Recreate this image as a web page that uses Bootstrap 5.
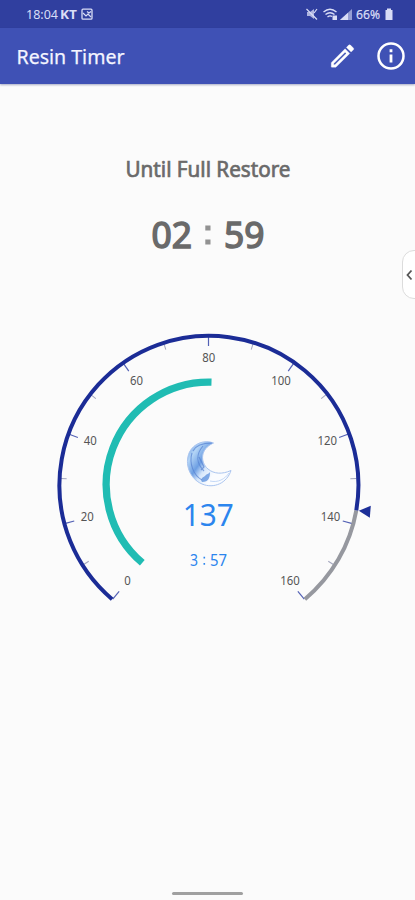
<!DOCTYPE html>
<html lang="en">
<head>
<meta charset="utf-8">
<meta name="viewport" content="width=device-width, initial-scale=1">
<title>Resin Timer</title>
<link href="https://cdn.jsdelivr.net/npm/bootstrap@5.3.0/dist/css/bootstrap.min.css" rel="stylesheet">
<style>
body{background:#fbfbfb;font-family:"Noto Sans","Open Sans",sans-serif;height:900px;overflow:hidden}
svg{display:block;flex:none}
text{font-family:"Noto Sans","Open Sans",sans-serif}
.status-strip{background:#303f9f;height:28px}
.app-bar{background:#3f51b5;height:56px;box-shadow:0 1px 2px rgba(40,50,110,.4)}
.timer-area{height:236px}
.gauge-area{height:290px}
.edge-handle{right:-12px;top:250px;width:25px;height:49px;border:1px solid #dcdcdc;border-radius:12px;background:#fff}
.home-line{width:71px;height:3px;background:#a0a0a0;margin-bottom:5px}
.tick-major{stroke:#5361b5;stroke-width:1.2}
.tick-minor{stroke:#a3a6bd;stroke-width:1}
.scale-num{font-size:12px;fill:#555;text-anchor:middle}
</style>
</head>
<body class="d-flex flex-column position-relative">
<header>
  <div class="status-strip">
    <svg width="415" height="28" fill="#d9ddf6">
      <text x="26" y="19" font-size="12.500" textLength="32" lengthAdjust="spacingAndGlyphs">18:04</text>
      <text x="60" y="19" font-size="12.500" font-weight="700" textLength="17" lengthAdjust="spacingAndGlyphs">KT</text>
      <rect x="82" y="9.2" width="10" height="10" rx="1" fill="none" stroke="#d9ddf6" stroke-width="1.3"/>
      <path d="M83 13l3 3 2-2 3 3M87 11.5l2 1.5 2-1.5" fill="none" stroke="#d9ddf6" stroke-width="1.2"/>
      <path d="M307 12h3l4-3v10l-4-3h-3z" opacity=".75"/>
      <path d="M306.500 9l10.500 10.500M317 9l-3 4" stroke="#d9ddf6" stroke-width="1.2"/>
      <path d="M323.500 12q6.500-5.500 13 0M325.500 14.500q4.500-3.500 9 0M327.500 17q2.500-2 4.500-.5" fill="none" stroke="#d9ddf6" stroke-width="1.400"/>
      <path d="M332.500 15.500h4.500v4.500h-4.500z"/>
      <path d="M352 9v11h-12z" opacity=".6"/><path d="M348 12.700v7.300h-8z"/>
      <text x="356" y="19" font-size="12.500" textLength="24" lengthAdjust="spacingAndGlyphs" stroke="#d9ddf6" stroke-width=".2">66%</text>
      <path d="M387 8.500h4v1.500h1.500v10h-7v-10h1.500z"/>
    </svg>
  </div>
  <nav class="app-bar">
    <svg width="415" height="56">
      <text x="16.500" y="36.300" font-size="20.500" fill="#f4f5ff" stroke="#f4f5ff" stroke-width=".25" textLength="108" lengthAdjust="spacingAndGlyphs">Resin Timer</text>
      <g transform="translate(327.500 13) scale(1.250)" fill="#fff" stroke="#fff" stroke-width=".25">
        <path d="M3 17.460v3.040c0 .28.22.5.5.5h3.040c.13 0 .26-.05.35-.15L17.810 9.940l-3.750-3.750L3.150 17.100c-.1.1-.15.22-.15.36zM5 19v-.92l9.060-9.060.92.92L5.920 19zM20.710 7.040a1 1 0 0 0 0-1.410l-2.340-2.340a1 1 0 0 0-1.410 0l-1.830 1.830 3.750 3.750z"/>
      </g>
      <circle cx="391" cy="28" r="12.500" fill="none" stroke="#fff" stroke-width="2.500"/>
      <path d="M391 26.500v8M391 21.200v3" stroke="#fff" stroke-width="2.800"/>
    </svg>
  </nav>
</header>
<main class="flex-grow-1">
  <section class="timer-area">
    <svg width="415" height="236" fill="#6a6a6a" stroke="#6a6a6a">
      <text x="125.500" y="92.700" font-size="21.500" stroke-width=".7" textLength="165" lengthAdjust="spacingAndGlyphs">Until Full Restore</text>
      <text x="151.500" y="164" font-size="36" stroke-width="1.500" textLength="40.500" lengthAdjust="spacingAndGlyphs">02</text>
      <path d="M205.300 141.500h5.200v5h-5.200zM205.300 155.500h5.200v5h-5.200z" fill="#929292" stroke="none"/>
      <text x="224" y="164" font-size="36" stroke-width="1.500" textLength="40.500" lengthAdjust="spacingAndGlyphs">59</text>
    </svg>
  </section>
  <section class="gauge-area">
    <svg width="415" height="290" viewBox="0 320 415 290">
      <defs>
        <linearGradient id="moonFill" x1="0" y1="0" x2="1" y2=".7">
          <stop offset="0" stop-color="#6597df"/><stop offset=".22" stop-color="#b3d4f6"/>
          <stop offset=".42" stop-color="#6d9fe3"/><stop offset=".56" stop-color="#d6e7fb"/><stop offset=".75" stop-color="#fafcff"/>
        </linearGradient>
      </defs>
      <g transform="translate(208.500 485)">
        <g class="tick-major">
          <path d="M0-149v10" transform="rotate(-140)"/><path d="M0-149v10" transform="rotate(-105)"/>
          <path d="M0-149v10" transform="rotate(-70)"/><path d="M0-149v10" transform="rotate(-35)"/>
          <path d="M0-149v10"/><path d="M0-149v10" transform="rotate(35)"/>
          <path d="M0-149v10" transform="rotate(70)"/><path d="M0-149v10" transform="rotate(105)"/>
          <path d="M0-149v10" transform="rotate(140)"/>
        </g>
        <g class="tick-minor">
          <path d="M0-148v6" transform="rotate(-122.500)"/><path d="M0-148v6" transform="rotate(-87.500)"/>
          <path d="M0-148v6" transform="rotate(-52.500)"/><path d="M0-148v6" transform="rotate(-17.500)"/>
          <path d="M0-148v6" transform="rotate(17.500)"/><path d="M0-148v6" transform="rotate(52.500)"/>
          <path d="M0-148v6" transform="rotate(87.500)"/><path d="M0-148v6" transform="rotate(122.500)"/>
        </g>
        <path d="M147.800 25.400A150 150 0 0 1 96.400 114.200" fill="none" stroke="#96989f" stroke-width="4"/>
        <path d="M-96.400 114.200A149.500 149.500 0 1 1 147.800 25.400" fill="none" stroke="#1b2c96" stroke-width="4"/>
        <path d="M-66.200 77.800A102.600 102.600 0 0 1 3-102.900" fill="none" stroke="#20bcb3" stroke-width="7.300"/>
      </g>
      <path d="M358.800 510.800l12-5-1 12z" fill="#1d2f98"/>
      <g class="scale-num">
        <text x="127.500" y="585" textLength="6.500" lengthAdjust="spacingAndGlyphs">0</text><text x="87.300" y="521" textLength="13" lengthAdjust="spacingAndGlyphs">20</text>
        <text x="90.300" y="445" textLength="13" lengthAdjust="spacingAndGlyphs">40</text><text x="136.500" y="385" textLength="13" lengthAdjust="spacingAndGlyphs">60</text>
        <text x="208.700" y="362.300" textLength="13" lengthAdjust="spacingAndGlyphs">80</text><text x="281" y="385" textLength="19.500" lengthAdjust="spacingAndGlyphs">100</text>
        <text x="327.300" y="445" textLength="19.500" lengthAdjust="spacingAndGlyphs">120</text><text x="330.500" y="521" textLength="19.500" lengthAdjust="spacingAndGlyphs">140</text>
        <text x="290" y="585" textLength="19.500" lengthAdjust="spacingAndGlyphs">160</text>
      </g>
      <path d="M213.500 443C205 439.500 194 443 189.500 452C184 464 190 479 202 484C214 489 227 483 231 470.500C222 474.500 214 474 208 469C200 462 200 449 213.500 443Z" fill="url(#moonFill)" stroke="#a9c4ef" stroke-width="1"/>
      <path d="M212 443c-9 0-16 2-19 8m10-5c-7 8-7 17 1 25m-12-18c-3 10 1 22 10 27m-3-23l5 10-3 3" fill="none" stroke="#5580d0" stroke-width="1.100" opacity=".7"/>
      <path d="M202 482c-2-3 1-5 3-6 1-2 4-2 5-4 0 5-1 10-8 10z" fill="#4f88da" opacity=".7"/>
      <path d="M210 481c8 2 15-2 19-8" fill="none" stroke="#c4d8f6"/>
      <g fill="#2b85ee">
        <text x="182.800" y="526" font-size="30.500" textLength="51" lengthAdjust="spacingAndGlyphs">137</text>
        <text x="190" y="566" font-size="15.500" textLength="8" lengthAdjust="spacingAndGlyphs">3</text>
        <path d="M203.500 556.700h1.600v1.700h-1.600zM203.500 563h1.600v1.700h-1.600z"/>
        <text x="210" y="566" font-size="15.500" textLength="17" lengthAdjust="spacingAndGlyphs">57</text>
      </g>
    </svg>
  </section>
</main>
<div class="position-absolute top-0 start-0 w-100 h-100 overflow-hidden pe-none">
  <div class="edge-handle position-absolute d-flex align-items-center">
    <svg width="12" height="14"><path d="M8.500 2.500l-4 4.500 4 4.500" fill="none" stroke="#555" stroke-width="1.800"/></svg>
  </div>
</div>
<footer class="d-flex justify-content-center"><div class="home-line rounded-pill"></div></footer>
<script src="https://cdn.jsdelivr.net/npm/bootstrap@5.3.0/dist/js/bootstrap.bundle.min.js"></script>
</body>
</html>
